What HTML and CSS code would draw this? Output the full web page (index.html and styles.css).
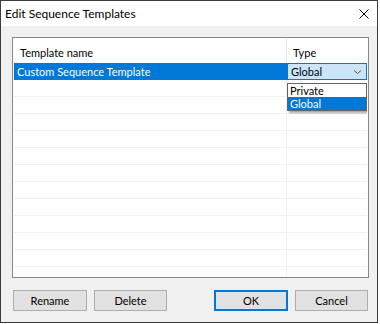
FILE: index.html
```html
<!DOCTYPE html>
<html lang="en">
<head>
    <meta charset="UTF-8">
    <meta name="viewport" content="width=device-width, initial-scale=1.0">
    <title>Edit Sequence Templates</title>
    <link rel="stylesheet" href="styles.css">
</head>
<body>
    <div class="window">
        <div class="titlebar">
            <span class="title">Edit Sequence Templates</span>
            <svg class="close" width="10" height="10" viewBox="0 0 10 10">
                <path d="M0.5 0.5 L9.5 9.5 M9.5 0.5 L0.5 9.5" stroke="#000" stroke-width="1"/>
            </svg>
        </div>

        <div class="content">
            <div class="list">
                <div class="list-head">
                    <div class="cell name">Template name</div>
                    <div class="cell type">Type</div>
                </div>

                <div class="list-body">
                    <div class="row selected">
                        <div class="cell name">Custom Sequence Template</div>
                        <div class="cell type">
                            <div class="combo">
                                <span>Global</span>
                                <svg class="chevron" width="7" height="4" viewBox="0 0 7 4">
                                    <path d="M0 0.5 L3.5 3.5 L7 0.5" fill="none" stroke="#555" stroke-width="1"/>
                                </svg>
                            </div>
                            <!-- open dropdown of the combo -->
                            <div class="dropdown">
                                <div class="option">Private</div>
                                <div class="option current">Global</div>
                            </div>
                        </div>
                    </div>
                    <div class="row"><div class="cell name"></div><div class="cell type"></div></div>
                    <div class="row"><div class="cell name"></div><div class="cell type"></div></div>
                    <div class="row"><div class="cell name"></div><div class="cell type"></div></div>
                    <div class="row"><div class="cell name"></div><div class="cell type"></div></div>
                    <div class="row"><div class="cell name"></div><div class="cell type"></div></div>
                    <div class="row"><div class="cell name"></div><div class="cell type"></div></div>
                    <div class="row"><div class="cell name"></div><div class="cell type"></div></div>
                    <div class="row"><div class="cell name"></div><div class="cell type"></div></div>
                    <div class="row"><div class="cell name"></div><div class="cell type"></div></div>
                    <div class="row"><div class="cell name"></div><div class="cell type"></div></div>
                    <div class="row"><div class="cell name"></div><div class="cell type"></div></div>
                    <div class="row"><div class="cell name"></div><div class="cell type"></div></div>
                </div>
            </div>

            <div class="buttons">
                <div class="group">
                    <button class="btn rename">Rename</button>
                    <button class="btn delete">Delete</button>
                </div>
                <div class="group">
                    <button class="btn ok default">OK</button>
                    <button class="btn cancel">Cancel</button>
                </div>
            </div>
        </div>
    </div>
</body>
</html>
```
FILE: styles.css
```css
body {
    margin: 0;
    background-color: #fff;
    font-family: Lato, "Noto Sans", sans-serif;
    font-size: 11px;
    color: #000;
}

/* Dialog window */
.window {
    width: 378px;
    height: 323px;
    box-sizing: border-box;
    border: 1px solid #3c3c3c;
    display: flex;
    flex-direction: column;
}

.titlebar {
    height: 25px;
    flex: none;
    background-color: #fff;
    display: flex;
    align-items: center;
    justify-content: space-between;
    padding: 0 8px 0 4px;
}

.title {
    font-size: 12px;
}

.close {
    display: block;
}

.content {
    flex: 1;
    background-color: #f0f0f0;
    padding: 11px 8px 11px 11px;
    display: flex;
    flex-direction: column;
}

/* List view */
.list {
    height: 241px;
    box-sizing: border-box;
    border: 1px solid #828790;
    background-color: #fff;
    padding: 1px;
    display: flex;
    flex-direction: column;
}

.list-head {
    height: 24px;
    flex: none;
    display: flex;
}

.list-head .cell {
    line-height: 27px;
    padding-left: 6px;
}

.list-head .name {
    border-right: 1px solid #e5e5e5;
}

.cell {
    box-sizing: border-box;
}

.cell.name {
    width: 273px;
}

.cell.type {
    width: 80px;
    position: relative;
}

.list-body {
    flex: 1;
    overflow: hidden;
}

.row {
    height: 17px;
    display: flex;
}

.row .cell {
    border-bottom: 1px solid #f0f0f0;
}

.row .name {
    border-right: 1px solid #f0f0f0;
    padding-left: 3px;
    line-height: 17px;
    white-space: nowrap;
}

.row.selected .name {
    background-color: #0078d7;
    border-color: #0078d7;
    color: #fff;
}

/* Combo box editor in the selected row */
.combo {
    height: 17px;
    box-sizing: border-box;
    border: 1px solid #0078d7;
    background-color: #cce4f7;
    display: flex;
    align-items: center;
    justify-content: space-between;
    padding: 0 5px 0 3px;
}

.chevron {
    display: block;
}

.dropdown {
    position: absolute;
    top: 20px;
    left: 0;
    width: 80px;
    box-sizing: border-box;
    border: 1px solid #646464;
    background-color: #fff;
    box-shadow: 2px 2px 2px rgba(0, 0, 0, 0.35);
    z-index: 5;
}

.option {
    height: 13px;
    line-height: 13px;
    padding-left: 2px;
}

.option.current {
    background-color: #0078d7;
    color: #fff;
}

/* Bottom buttons */
.buttons {
    margin-top: 12px;
    display: flex;
    justify-content: space-between;
}

.group {
    display: flex;
    gap: 7px;
}

.btn {
    height: 21px;
    box-sizing: border-box;
    border: 1px solid #adadad;
    background-color: #e1e1e1;
    font-family: inherit;
    font-size: 11px;
    font-weight: normal;
    color: #000;
    padding: 0;
}

.rename {
    width: 74px;
    margin-left: 1px;
}

.delete {
    width: 73px;
}

.ok {
    width: 74px;
}

.cancel {
    width: 73px;
    margin-right: 1px;
}

.btn.default {
    border: 2px solid #0078d7;
}
```
